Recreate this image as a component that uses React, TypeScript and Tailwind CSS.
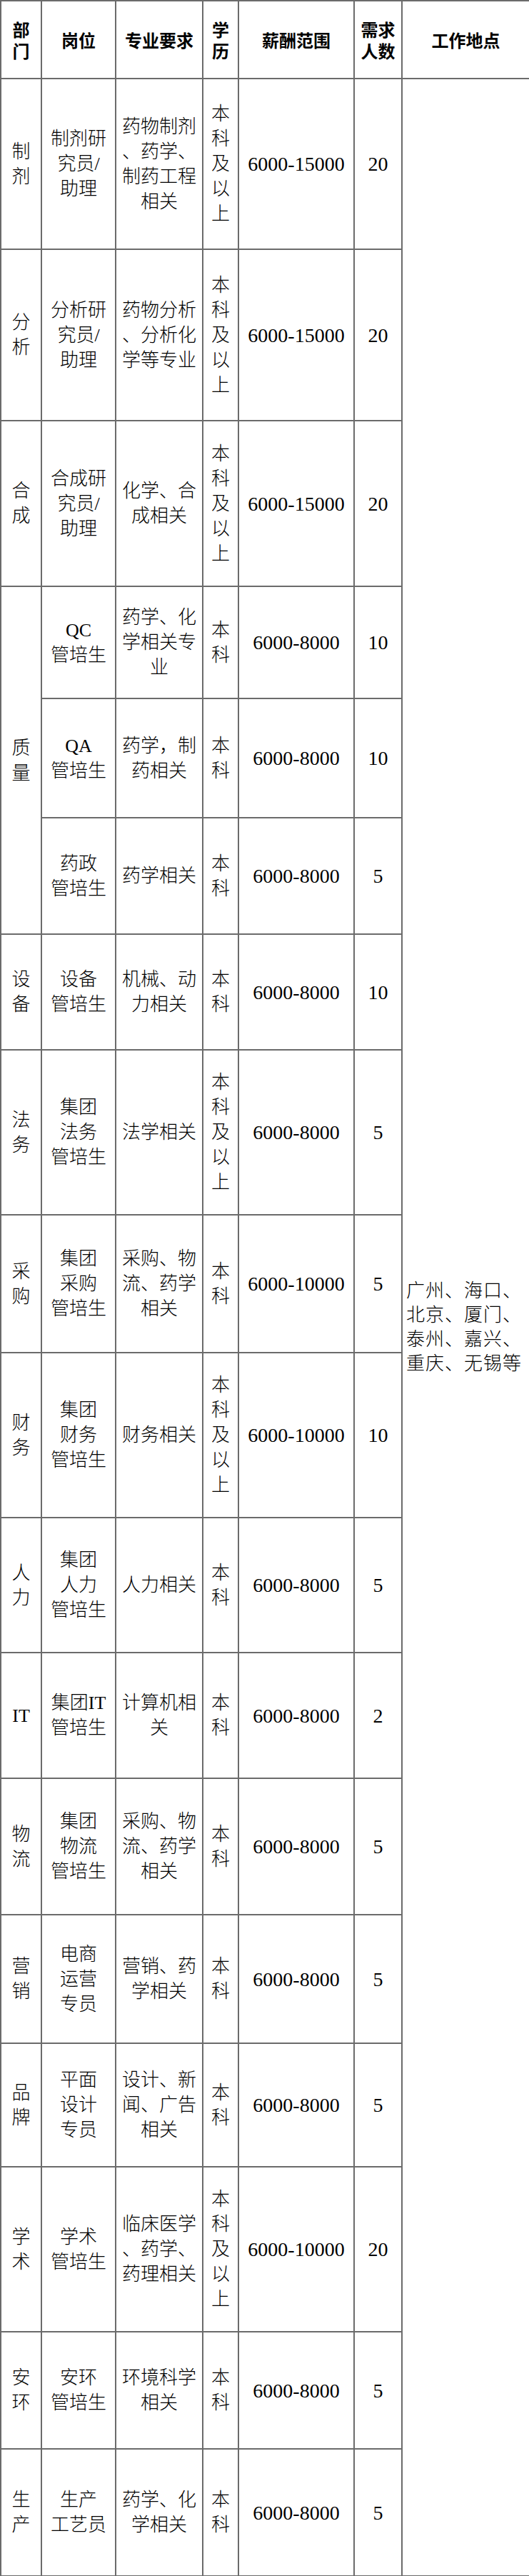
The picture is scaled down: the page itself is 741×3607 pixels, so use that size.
type Row = {
  h: string;
  dept?: string[];
  deptSpan?: number;
  pos: string[];
  major: string[];
  edu: string[];
  salary: string;
  num: string;
};

const BK5 = ["本", "科", "及", "以", "上"];
const BK2 = ["本", "科"];

const rows: Row[] = [
  { h: "h-[239px]", dept: ["制", "剂"], pos: ["制剂研", "究员/", "助理"], major: ["药物制剂", "、药学、", "制药工程", "相关"], edu: BK5, salary: "6000-15000", num: "20" },
  { h: "h-[240px]", dept: ["分", "析"], pos: ["分析研", "究员/", "助理"], major: ["药物分析", "、分析化", "学等专业"], edu: BK5, salary: "6000-15000", num: "20" },
  { h: "h-[232px]", dept: ["合", "成"], pos: ["合成研", "究员/", "助理"], major: ["化学、合", "成相关"], edu: BK5, salary: "6000-15000", num: "20" },
  { h: "h-[157px]", dept: ["质", "量"], deptSpan: 3, pos: ["QC", "管培生"], major: ["药学、化", "学相关专", "业"], edu: BK2, salary: "6000-8000", num: "10" },
  { h: "h-[167px]", pos: ["QA", "管培生"], major: ["药学，制", "药相关"], edu: BK2, salary: "6000-8000", num: "10" },
  { h: "h-[163px]", pos: ["药政", "管培生"], major: ["药学相关"], edu: BK2, salary: "6000-8000", num: "5" },
  { h: "h-[162px]", dept: ["设", "备"], pos: ["设备", "管培生"], major: ["机械、动", "力相关"], edu: BK2, salary: "6000-8000", num: "10" },
  { h: "h-[231px]", dept: ["法", "务"], pos: ["集团", "法务", "管培生"], major: ["法学相关"], edu: BK5, salary: "6000-8000", num: "5" },
  { h: "h-[193px]", dept: ["采", "购"], pos: ["集团", "采购", "管培生"], major: ["采购、物", "流、药学", "相关"], edu: BK2, salary: "6000-10000", num: "5" },
  { h: "h-[231px]", dept: ["财", "务"], pos: ["集团", "财务", "管培生"], major: ["财务相关"], edu: BK5, salary: "6000-10000", num: "10" },
  { h: "h-[189px]", dept: ["人", "力"], pos: ["集团", "人力", "管培生"], major: ["人力相关"], edu: BK2, salary: "6000-8000", num: "5" },
  { h: "h-[176px]", dept: ["IT"], pos: ["集团IT", "管培生"], major: ["计算机相", "关"], edu: BK2, salary: "6000-8000", num: "2" },
  { h: "h-[191px]", dept: ["物", "流"], pos: ["集团", "物流", "管培生"], major: ["采购、物", "流、药学", "相关"], edu: BK2, salary: "6000-8000", num: "5" },
  { h: "h-[180px]", dept: ["营", "销"], pos: ["电商", "运营", "专员"], major: ["营销、药", "学相关"], edu: BK2, salary: "6000-8000", num: "5" },
  { h: "h-[173px]", dept: ["品", "牌"], pos: ["平面", "设计", "专员"], major: ["设计、新", "闻、广告", "相关"], edu: BK2, salary: "6000-8000", num: "5" },
  { h: "h-[231px]", dept: ["学", "术"], pos: ["学术", "管培生"], major: ["临床医学", "、药学、", "药理相关"], edu: BK5, salary: "6000-10000", num: "20" },
  { h: "h-[164px]", dept: ["安", "环"], pos: ["安环", "管培生"], major: ["环境科学", "相关"], edu: BK2, salary: "6000-8000", num: "5" },
  { h: "h-[178px]", dept: ["生", "产"], pos: ["生产", "工艺员"], major: ["药学、化", "学相关"], edu: BK2, salary: "6000-8000", num: "5" },
];

const cities = ["广州、海口、", "北京、厦门、", "泰州、嘉兴、", "重庆、无锡等"];

function Lines({ lines }: { lines: string[] }) {
  return (
    <>
      {lines.map((l, i) => (
        <div key={i} className="whitespace-nowrap">
          {l}
        </div>
      ))}
    </>
  );
}

const cell = "border-2 border-[#6b6b6b] text-center align-middle p-0";
const numCell = "border-2 border-[#6b6b6b] text-center align-middle p-0 text-[28px]";
const th = "border-2 border-[#6b6b6b] text-center align-middle p-0 font-bold text-[24px] leading-[30px] font-['Noto_Sans_CJK_SC',sans-serif]";

export default function App() {
  return (
    <div className="w-[741px] bg-white text-black">
      <table className="w-[741px] table-fixed border-collapse font-['Liberation_Serif','Noto_Sans_CJK_SC',serif] text-[26px] leading-[35px] font-light">
        <colgroup>
          <col className="w-[57px]" />
          <col className="w-[104px]" />
          <col className="w-[122px]" />
          <col className="w-[50px]" />
          <col className="w-[162px]" />
          <col className="w-[67px]" />
          <col className="w-[179px]" />
        </colgroup>
        <thead>
          <tr className="h-[109px]">
            <th className={th}>
              <Lines lines={["部", "门"]} />
            </th>
            <th className={th}>岗位</th>
            <th className={th}>专业要求</th>
            <th className={th}>
              <Lines lines={["学", "历"]} />
            </th>
            <th className={th}>薪酬范围</th>
            <th className={th}>
              <Lines lines={["需求", "人数"]} />
            </th>
            <th className={th}>工作地点</th>
          </tr>
        </thead>
        <tbody>
          {rows.map((r, i) => (
            <tr key={i} className={r.h}>
              {r.dept && (
                <td className={cell} rowSpan={r.deptSpan ?? 1}>
                  <Lines lines={r.dept} />
                </td>
              )}
              <td className={cell}>
                <Lines lines={r.pos} />
              </td>
              <td className={cell}>
                <Lines lines={r.major} />
              </td>
              <td className={cell}>
                <Lines lines={r.edu} />
              </td>
              <td className={numCell}>{r.salary}</td>
              <td className={numCell}>{r.num}</td>
              {i === 0 && (
                <td
                  className="border-2 border-[#6b6b6b] align-middle p-0 pl-[5px] text-left leading-[34px] tracking-[1px]"
                  rowSpan={rows.length}
                >
                  <Lines lines={cities} />
                </td>
              )}
            </tr>
          ))}
        </tbody>
      </table>
    </div>
  );
}
